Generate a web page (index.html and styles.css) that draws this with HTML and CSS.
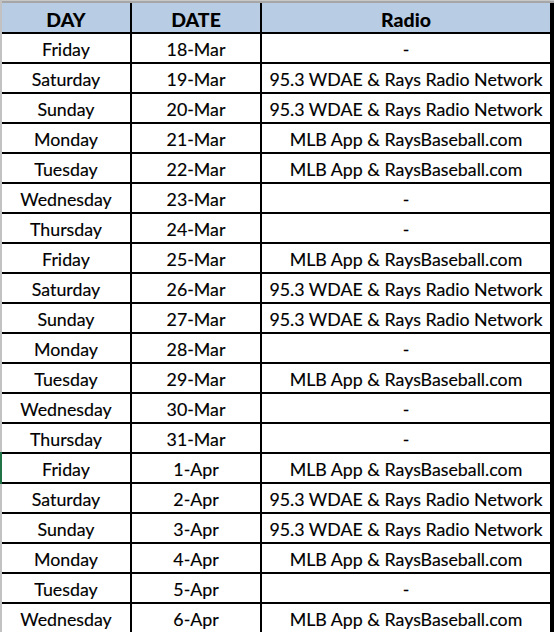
FILE: index.html
```html
<!DOCTYPE html>
<html>
<head>
<meta charset="utf-8">
<link rel="stylesheet" href="styles.css">
</head>
<body>
<div class="sheet">
  <div class="rowstrip">
    <div class="strip-gray top"></div>
    <div class="strip-green"></div>
    <div class="strip-gray rest"></div>
  </div>
  <div class="main">
    <div class="topbar"></div>
    <div class="grid">
      <div class="cell head">DAY</div><div class="cell head">DATE</div><div class="cell head">Radio</div>
      <div class="cell">Friday</div><div class="cell">18-Mar</div><div class="cell">-</div>
      <div class="cell">Saturday</div><div class="cell">19-Mar</div><div class="cell">95.3 WDAE &amp; Rays Radio Network</div>
      <div class="cell">Sunday</div><div class="cell">20-Mar</div><div class="cell">95.3 WDAE &amp; Rays Radio Network</div>
      <div class="cell">Monday</div><div class="cell">21-Mar</div><div class="cell">MLB App &amp; RaysBaseball.com</div>
      <div class="cell">Tuesday</div><div class="cell">22-Mar</div><div class="cell">MLB App &amp; RaysBaseball.com</div>
      <div class="cell">Wednesday</div><div class="cell">23-Mar</div><div class="cell">-</div>
      <div class="cell">Thursday</div><div class="cell">24-Mar</div><div class="cell">-</div>
      <div class="cell">Friday</div><div class="cell">25-Mar</div><div class="cell">MLB App &amp; RaysBaseball.com</div>
      <div class="cell">Saturday</div><div class="cell">26-Mar</div><div class="cell">95.3 WDAE &amp; Rays Radio Network</div>
      <div class="cell">Sunday</div><div class="cell">27-Mar</div><div class="cell">95.3 WDAE &amp; Rays Radio Network</div>
      <div class="cell">Monday</div><div class="cell">28-Mar</div><div class="cell">-</div>
      <div class="cell">Tuesday</div><div class="cell">29-Mar</div><div class="cell">MLB App &amp; RaysBaseball.com</div>
      <div class="cell">Wednesday</div><div class="cell">30-Mar</div><div class="cell">-</div>
      <div class="cell">Thursday</div><div class="cell">31-Mar</div><div class="cell">-</div>
      <div class="cell">Friday</div><div class="cell">1-Apr</div><div class="cell">MLB App &amp; RaysBaseball.com</div>
      <div class="cell">Saturday</div><div class="cell">2-Apr</div><div class="cell">95.3 WDAE &amp; Rays Radio Network</div>
      <div class="cell">Sunday</div><div class="cell">3-Apr</div><div class="cell">95.3 WDAE &amp; Rays Radio Network</div>
      <div class="cell">Monday</div><div class="cell">4-Apr</div><div class="cell">MLB App &amp; RaysBaseball.com</div>
      <div class="cell">Tuesday</div><div class="cell">5-Apr</div><div class="cell">-</div>
      <div class="cell">Wednesday</div><div class="cell">6-Apr</div><div class="cell">MLB App &amp; RaysBaseball.com</div>
    </div>
  </div>
</div>
</body>
</html>
```

FILE: styles.css
```css
html, body {
  margin: 0;
  padding: 0;
  background: #ffffff;
}
body {
  width: 554px;
  height: 632px;
  overflow: hidden;
  font-family: Lato, "Open Sans", sans-serif;
  color: #000;
}
.sheet {
  display: flex;
  align-items: flex-start;
  height: 632px;
  overflow: hidden;
}
.rowstrip {
  width: 2px;
  display: flex;
  flex-direction: column;
  flex: none;
}
.strip-gray {
  background: #c2c2c2;
}
.strip-gray.top { height: 452px; }
.strip-gray.rest { height: 180px; }
.strip-green {
  height: 32px;
  background: #217346;
}
.main {
  display: flex;
  flex-direction: column;
  width: 552px;
}
.topbar {
  height: 3px;
  background: #a6a6a6;
  border-top: 1px solid #c8c8c8;
  box-sizing: border-box;
}
.grid {
  display: grid;
  grid-template-columns: 128px 128px 288px;
  grid-template-rows: 29px;
  grid-auto-rows: 28px;
  gap: 2px;
  background: #000;
  padding: 0 2px 2px 0;
  width: 550px;
}
.cell {
  background: #fff;
  display: flex;
  align-items: center;
  justify-content: center;
  font-size: 17.8px;
  line-height: 1;
  white-space: nowrap;
  padding-top: 3px;
  box-sizing: border-box;
  -webkit-text-stroke: 0.15px #000;
}
.cell.head {
  background: #b8cce4;
  font-weight: 900;
  font-size: 19.5px;
  padding-top: 4px;
  -webkit-text-stroke: 0;
}
```
